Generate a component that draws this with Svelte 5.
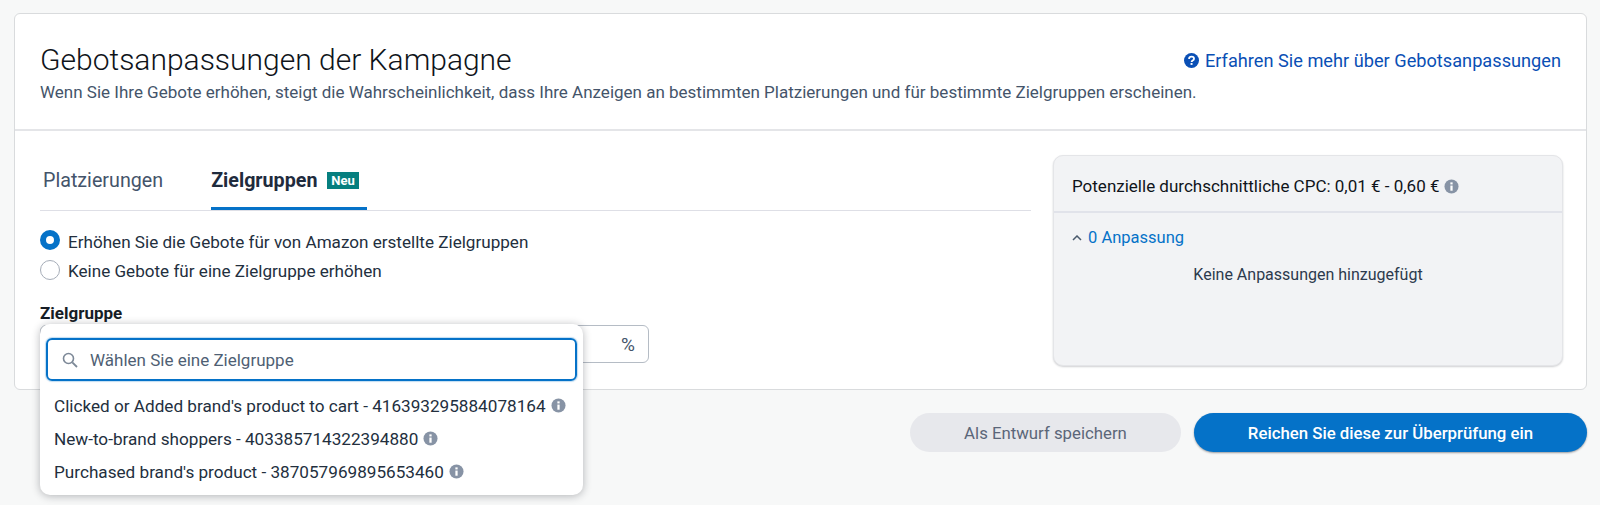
<script>
  const options = [
    "Clicked or Added brand's product to cart - 416393295884078164",
    "New-to-brand shoppers - 403385714322394880",
    "Purchased brand's product - 387057969895653460",
  ]
</script>

{#snippet info()}
  <svg class="info" viewBox="0 0 16 16">
    <circle cx="8" cy="8" r="7.5" fill="#8793a5" />
    <rect x="6.8" y="7" width="2.4" height="5.5" fill="#fff" />
    <rect x="6.8" y="3.6" width="2.4" height="2.2" fill="#fff" />
  </svg>
{/snippet}

<div class="page">
  <section class="card">
    <header class="card-head">
      <div class="head-top">
        <h1>Gebotsanpassungen der Kampagne</h1>
        <a class="learn" href="#top">
          <svg class="help" viewBox="0 0 16 16">
            <circle cx="8" cy="8" r="8" fill="#0a4fb5" />
            <path d="M5.4 6.3c0-1.6 1.2-2.5 2.7-2.5s2.6.9 2.6 2.2c0 2-2.6 2-2.6 3.5" fill="none" stroke="#fff" stroke-width="1.9" />
            <rect x="7" y="10.7" width="2.1" height="2" fill="#fff" />
          </svg>
          Erfahren Sie mehr über Gebotsanpassungen
        </a>
      </div>
      <p>Wenn Sie Ihre Gebote erhöhen, steigt die Wahrscheinlichkeit, dass Ihre Anzeigen an bestimmten Platzierungen und für bestimmte Zielgruppen erscheinen.</p>
    </header>

    <div class="card-body">
      <div class="left">
        <div class="tabs">
          <div class="tab">Platzierungen</div>
          <div class="tab active">Zielgruppen <span class="badge">Neu</span></div>
        </div>

        <div class="radios">
          <div class="radio-row"><span class="radio on"></span>Erhöhen Sie die Gebote für von Amazon erstellte Zielgruppen</div>
          <div class="radio-row"><span class="radio"></span>Keine Gebote für eine Zielgruppe erhöhen</div>
        </div>

        <div class="label">Zielgruppe</div>
        <div class="field">
          <div class="percent">%</div>

          <div class="dropdown">
            <div class="search">
              <svg viewBox="0 0 16 16" class="search-icon">
                <circle cx="6.5" cy="6.5" r="5" fill="none" stroke="#7c8897" stroke-width="1.6" />
                <path d="M10.3 10.3L15 15" stroke="#7c8897" stroke-width="1.8" />
              </svg>
              <span>Wählen Sie eine Zielgruppe</span>
            </div>
            <ul>
              {#each options as option}
                <li>{option} {@render info()}</li>
              {/each}
            </ul>
          </div>
        </div>
      </div>

      <aside class="summary">
        <div class="summary-head">Potenzielle durchschnittliche CPC: 0,01 € - 0,60 € {@render info()}</div>
        <div class="summary-body">
          <div class="toggle">
            <svg viewBox="0 0 10 6" class="chevron"><path d="M1 5l4-4 4 4" fill="none" stroke="#4a5a6c" stroke-width="1.5" /></svg>
            0 Anpassung
          </div>
          <div class="empty">Keine Anpassungen hinzugefügt</div>
        </div>
      </aside>
    </div>
  </section>

  <div class="actions">
    <button class="draft">Als Entwurf speichern</button>
    <button class="submit">Reichen Sie diese zur Überprüfung ein</button>
  </div>
</div>

<style>
  :global(body) {
    background: #f7f8f8;
  }

  .page {
    height: 505px;
    padding: 13px 13px 0 14px;
    box-sizing: border-box;
    overflow: hidden;
    font-family: Roboto, "Liberation Sans", sans-serif;
    font-size: 17px;
    color: #161d26;
  }

  .card {
    height: 377px;
    box-sizing: border-box;
    background: #fff;
    border: 1px solid #d9dbdd;
    border-radius: 6px;
  }

  .card-head {
    height: 117px;
    box-sizing: border-box;
    padding: 29px 25px 0 25px;
    border-bottom: 2px solid #e4e5e8;
  }

  .head-top {
    display: flex;
    justify-content: space-between;
    align-items: center;
  }

  h1 {
    margin: 0;
    font-size: 30px;
    font-weight: 300;
    line-height: 34px;
    color: #0f141a;
  }

  .learn {
    display: flex;
    align-items: center;
    gap: 6px;
    font-size: 18.2px;
    color: #0a4fb5;
    text-decoration: none;
  }

  .help {
    width: 15px;
    height: 15px;
  }

  .card-head p {
    margin: 5px 0 0;
    color: #44546a;
  }

  .card-body {
    display: flex;
    justify-content: space-between;
    padding: 24px 23px 0 25px;
  }

  .left {
    width: 991px;
  }

  .tabs {
    display: flex;
    gap: 48px;
    height: 55px;
    padding-left: 3px;
    border-bottom: 1px solid #dedfe6;
    font-size: 19.7px;
  }

  .tab {
    height: 53px;
    padding-top: 14px;
    box-sizing: border-box;
    color: #44546a;
  }

  .tab.active {
    height: 55px;
    width: 156px;
    font-weight: 700;
    color: #1f2b3d;
    border-bottom: 3px solid #0572c8;
    white-space: nowrap;
  }

  .badge {
    display: inline-block;
    padding: 0 4px;
    margin-left: 5px;
    background: #067f7f;
    color: #fff;
    font-size: 13px;
    line-height: 17px;
    vertical-align: 2px;
  }

  .radios {
    margin-top: 16px;
  }

  .radio-row {
    display: flex;
    align-items: center;
    gap: 8px;
    height: 29px;
    font-size: 17.1px;
    color: #232f3e;
  }

  .radio {
    width: 20px;
    height: 20px;
    margin-top: -2px;
    box-sizing: border-box;
    border-radius: 50%;
    border: 1px solid #a6adb8;
    background: #fff;
  }

  .radio.on {
    margin-top: -4px;
    border: 6px solid #0572c8;
  }

  .label {
    margin-top: 18px;
    font-weight: 700;
    line-height: 20px;
  }

  .field {
    position: relative;
    width: 609px;
    height: 38px;
    margin-top: 2px;
  }

  .percent {
    height: 38px;
    box-sizing: border-box;
    border: 1px solid #b5bcc5;
    border-radius: 6px;
    text-align: right;
    padding: 7px 13px 0 0;
    font-size: 19px;
    color: #44546a;
  }

  .dropdown {
    position: absolute;
    left: 0;
    top: -1px;
    width: 543px;
    height: 171px;
    box-sizing: border-box;
    padding: 14px 6px 0;
    background: #fff;
    border-radius: 10px;
    box-shadow: 0 1px 8px rgba(15, 20, 30, 0.3);
  }

  .search {
    display: flex;
    align-items: center;
    gap: 12px;
    height: 43px;
    box-sizing: border-box;
    padding-left: 14px;
    border: 2px solid #0572c8;
    border-radius: 6px;
    box-shadow: 0 0 1px 1px rgba(5, 114, 200, 0.25);
    color: #4f5f74;
  }

  .search-icon {
    width: 16px;
    height: 16px;
  }

  ul {
    list-style: none;
    margin: 0;
    padding: 8px 8px 0;
    font-size: 17.15px;
    color: #232f3e;
  }

  li {
    display: flex;
    align-items: center;
    gap: 5px;
    height: 33px;
  }

  .info {
    width: 15px;
    height: 15px;
    vertical-align: -2px;
  }

  .summary {
    width: 510px;
    height: 211px;
    box-sizing: border-box;
    background: #f2f3f5;
    border: 1px solid #e4e5e8;
    border-radius: 10px;
    box-shadow: 0 1px 2px rgba(15, 20, 30, 0.2);
  }

  .summary-head {
    height: 57px;
    box-sizing: border-box;
    padding: 20px 18px 0;
    border-bottom: 2px solid #e1e3ea;
    color: #0f141a;
  }

  .summary-body {
    padding: 15px 18px;
  }

  .toggle {
    font-size: 16.5px;
    color: #0572c8;
  }

  .chevron {
    width: 10px;
    height: 6px;
    vertical-align: 2px;
    margin-right: 2px;
  }

  .empty {
    margin-top: 18px;
    text-align: center;
    font-size: 16px;
    color: #2c3a4d;
  }

  .actions {
    display: flex;
    justify-content: flex-end;
    gap: 13px;
    margin-top: 23px;
  }

  button {
    height: 39px;
    border: none;
    border-radius: 20px;
    font-family: inherit;
    font-size: 16.8px;
  }

  .draft {
    width: 271px;
    background: #e7e8ec;
    color: #5b6679;
  }

  .submit {
    width: 393px;
    background: #0572c8;
    color: #fff;
    font-weight: 500;
    box-shadow: 0 1px 2px rgba(15, 20, 30, 0.4);
  }
</style>
